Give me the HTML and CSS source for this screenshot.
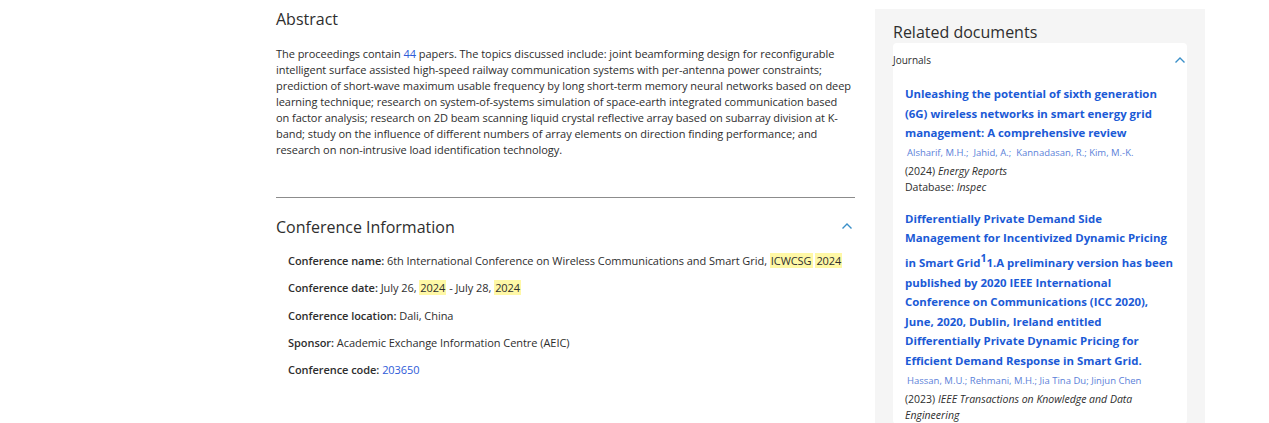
FILE: index.html
```html
<!DOCTYPE html>
<html lang="en">
<head>
<meta charset="utf-8">
<title>Conference proceedings</title>
<link rel="stylesheet" href="styles.css">
</head>
<body>
<div class="page">
  <main class="main">
    <section class="abstract">
      <h2 class="section-title">Abstract</h2>
      <p class="abstract-text">The proceedings contain <span class="link">44</span> papers. The topics discussed include: joint beamforming design for reconfigurable<br>intelligent surface assisted high-speed railway communication systems with per-antenna power constraints;<br>prediction of short-wave maximum usable frequency by long short-term memory neural networks based on deep<br>learning technique; research on system-of-systems simulation of space-earth integrated communication based<br>on factor analysis; research on 2D beam scanning liquid crystal reflective array based on subarray division at K-<br>band; study on the influence of different numbers of array elements on direction finding performance; and<br>research on non-intrusive load identification technology.</p>
    </section>
    <section class="conference">
      <div class="conf-head">
        <h2 class="section-title">Conference Information</h2>
        <svg class="chevron" width="12" height="8" viewBox="0 0 12 8"><path d="M1.5 6.5 L6 2 L10.5 6.5" fill="none" stroke="#3a8fc8" stroke-width="1.4"/></svg>
      </div>
      <dl class="conf-list">
        <div class="conf-row"><dt>Conference name:</dt> <dd>6th International Conference on Wireless Communications and Smart Grid, <mark>ICWCSG</mark> <mark>2024</mark></dd></div>
        <div class="conf-row"><dt>Conference date:</dt> <dd>July 26, <mark>2024</mark> - July 28, <mark>2024</mark></dd></div>
        <div class="conf-row"><dt>Conference location:</dt> <dd>Dali, China</dd></div>
        <div class="conf-row"><dt>Sponsor:</dt> <dd>Academic Exchange Information Centre (AEIC)</dd></div>
        <div class="conf-row"><dt>Conference code:</dt> <dd><span class="link">203650</span></dd></div>
      </dl>
    </section>
  </main>
  <aside class="related">
    <h2 class="related-title">Related documents</h2>
    <div class="card">
      <div class="card-head">
        <span>Journals</span>
        <svg class="chevron" width="12" height="8" viewBox="0 0 12 8"><path d="M1.5 6.5 L6 2 L10.5 6.5" fill="none" stroke="#3a8fc8" stroke-width="1.4"/></svg>
      </div>
      <ul class="docs">
        <li class="doc">
          <a class="doc-title">Unleashing the potential of sixth generation (6G) wireless networks in smart energy grid management: A comprehensive review</a>
          <div class="authors">Alsharif, M.H.;&nbsp; Jahid, A.;&nbsp; Kannadasan, R.; Kim, M.-K.</div>
          <div class="meta">(2024) <em>Energy Reports</em></div>
          <div class="meta">Database: <em>Inspec</em></div>
        </li>
        <li class="doc">
          <a class="doc-title">Differentially Private Demand Side Management for Incentivized Dynamic Pricing in Smart Grid<sup>1</sup>1.A preliminary version has been published by 2020 IEEE International Conference on Communications (ICC 2020), June, 2020, Dublin, Ireland entitled Differentially Private Dynamic Pricing for Efficient Demand Response in Smart Grid.</a>
          <div class="authors">Hassan, M.U.; Rehmani, M.H.; Jia Tina Du; Jinjun Chen</div>
          <div class="meta">(2023) <em>IEEE Transactions on Knowledge and Data Engineering</em></div>
        </li>
      </ul>
    </div>
  </aside>
</div>
</body>
</html>
```
FILE: styles.css
```css
* { box-sizing: border-box; }
html, body { margin: 0; padding: 0; background: #fff; }
body {
  font-family: "Open Sans", "Noto Sans", sans-serif;
  color: #2e2e2e;
  overflow: hidden;
  height: 423px;
}
.page {
  display: flex;
  align-items: flex-start;
  padding-left: 276px;
}
.main {
  width: 579px;
  padding-top: 9px;
}
.section-title {
  margin: 0;
  font-size: 16px;
  font-weight: 400;
  line-height: 20px;
  color: #2e2e2e;
}
.abstract { padding-bottom: 39px; border-bottom: 1px solid #8c8c8c; }
.abstract-text {
  margin: 17px 0 0;
  font-size: 11px;
  line-height: 16px;
  letter-spacing: -0.05px;
  white-space: nowrap;
}
.link { color: #2e5bd8; }
.conference { padding-top: 19px; }
.conf-head {
  display: flex;
  justify-content: space-between;
  align-items: center;
}
.conf-head .chevron { margin-right: 2px; margin-top: -3px; }
.conf-list { margin: 16px 0 0; padding-left: 12px; font-size: 11px; letter-spacing: -0.05px; }
.conf-row { line-height: 16px; margin-bottom: 11.3px; }
.conf-row dt { display: inline; font-weight: 600; }
.conf-row dd { display: inline; margin: 0; }
mark { background: #fff8a6; color: inherit; padding: 0 1px; }
.related {
  margin-left: 20px;
  margin-top: 9px;
  width: 330px;
  background: #f5f5f5;
  padding: 12px 18px 0 18px;
  height: 414px;
}
.related-title {
  margin: 0;
  font-size: 16px;
  font-weight: 400;
  line-height: 22px;
  color: #2e2e2e;
}
.card {
  background: #fff;
  border-radius: 4px;
  padding-top: 9px;
}
.card-head {
  display: flex;
  justify-content: space-between;
  align-items: center;
  font-size: 10px;
  line-height: 16px;
  padding-right: 1px;
}
.docs { list-style: none; margin: 0; padding: 16px 12px 0 12px; }
.doc { margin-bottom: 13px; }
.doc-title {
  display: block;
  color: #1b5ad6;
  font-weight: 700;
  font-size: 11.4px;
  line-height: 19.6px;
}
.doc-title sup { font-size: 10.5px; line-height: 20.5px; vertical-align: 5px; }
.authors { color: #5b7fd9; font-size: 9.5px; line-height: 16px; padding-left: 2px; margin-top: 2px; margin-bottom: 2px; }
.meta { font-size: 10.5px; line-height: 16.5px; }
```
